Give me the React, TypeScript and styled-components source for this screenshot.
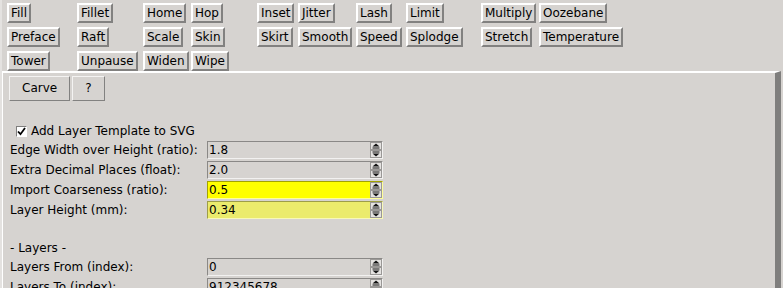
import * as React from 'react'
import styled, { createGlobalStyle } from 'styled-components'

const bg = '#d6d3d0'
const shadow = '#828180'

const GlobalStyle = createGlobalStyle`
  html, body {
    margin: 0;
    padding: 0;
    overflow: hidden;
    background: ${bg};
  }
  body {
    font-family: 'DejaVu Sans', 'Liberation Sans', sans-serif;
    font-size: 12px;
    color: #000;
  }
`

const Window = styled.div`
  width: 781px;
  height: 288px;
  overflow: hidden;
  border-left: 2px solid #e4e2e0;
  display: flex;
  flex-direction: column;
`

const ToolGrid = styled.div`
  height: 73px;
  box-sizing: border-box;
  padding: 3px 0 0 5px;
  display: grid;
  grid-template-columns: 70px 66px 48px 66px 41px 58px 50px 75px 58px auto;
  grid-auto-rows: 20px;
  row-gap: 4px;
  justify-items: start;
`

const ToolButton = styled.button<{ $col: number; $row: number }>`
  grid-column: ${p => p.$col};
  grid-row: ${p => p.$row};
  font: inherit;
  color: inherit;
  line-height: 16px;
  height: 20px;
  margin: 0;
  padding: 0 2px 0 2px;
  min-width: 22px;
  background: ${bg};
  border: 2px solid;
  border-color: #fff ${shadow} ${shadow} #fff;
  white-space: nowrap;
`

const Panel = styled.div`
  flex: 1;
  margin-right: 2px;
  border-top: 2px solid #fff;
  border-left: 1px solid #fff;
  border-right: 6px solid #7f7e7d;
  padding: 3px 0 0 6px;
  display: flex;
  flex-direction: column;
`

const ActionRow = styled.div`
  display: flex;
  gap: 2px;
`

const ActionButton = styled.button`
  font: inherit;
  color: inherit;
  height: 25px;
  line-height: 23px;
  margin: 0;
  padding: 0 12px;
  background: ${bg};
  border: 1px solid;
  border-color: #f4f3f2 ${shadow} ${shadow} #f4f3f2;
`

const CheckRow = styled.label`
  display: flex;
  align-items: center;
  gap: 4px;
  height: 18px;
  margin: 21px 0 1px 7px;
`

const CheckBox = styled.span`
  width: 9px;
  height: 9px;
  border: 1px solid;
  border-color: #7f7e7d #fff #fff #7f7e7d;
  background: #fff;
  display: flex;
  align-items: center;
  justify-content: center;
`

const Form = styled.div`
  display: grid;
  grid-template-columns: 197px 176px;
  align-items: center;
  row-gap: 2px;
  padding-left: 1px;
`

const Label = styled.div<{ $height?: number }>`
  grid-column: 1;
  height: ${p => p.$height ?? 18}px;
  line-height: ${p => p.$height ?? 18}px;
  white-space: nowrap;
`

const Blank = styled.div`
  grid-column: 1 / 3;
  height: 17px;
`

const Field = styled.div<{ $fill: string; $dark: string; $light: string }>`
  grid-column: 2;
  height: 18px;
  box-sizing: border-box;
  display: flex;
  background: ${p => p.$fill};
  border: 1px solid;
  border-color: ${p => p.$dark} ${p => p.$light} ${p => p.$light} ${p => p.$dark};
`

const Value = styled.span`
  flex: 1;
  line-height: 16px;
  padding-left: 1px;
`

const Spin = styled.svg`
  flex: none;
  width: 12px;
  height: 16px;
`

const tools: [string, number, number][] = [
  ['Fill', 1, 1], ['Fillet', 2, 1], ['Home', 3, 1], ['Hop', 4, 1],
  ['Inset', 5, 1], ['Jitter', 6, 1], ['Lash', 7, 1], ['Limit', 8, 1],
  ['Multiply', 9, 1], ['Oozebane', 10, 1],
  ['Preface', 1, 2], ['Raft', 2, 2], ['Scale', 3, 2], ['Skin', 4, 2],
  ['Skirt', 5, 2], ['Smooth', 6, 2], ['Speed', 7, 2], ['Splodge', 8, 2],
  ['Stretch', 9, 2], ['Temperature', 10, 2],
  ['Tower', 1, 3], ['Unpause', 2, 3], ['Widen', 3, 3], ['Wipe', 4, 3],
]

const tones = {
  plain: { fill: bg, dark: '#8a8886', light: '#f2f1f0' },
  bright: { fill: '#ffff00', dark: '#a3a300', light: '#ffff9a' },
  soft: { fill: '#ebeb6c', dark: '#9d9d48', light: '#f8f8b8' },
}

type Tone = keyof typeof tones

const SpinArrows = () => (
  <Spin viewBox="0 0 12 16">
    <rect x="0.5" y="0.5" width="11" height="7" fill="#e4e2e0" stroke="#9a9896" />
    <rect x="0.5" y="8.5" width="11" height="7" fill="#e4e2e0" stroke="#9a9896" />
    <polygon points="6,1.5 9.5,4.5 2.5,4.5" fill="#111" />
    <rect x="2.5" y="5.5" width="7" height="1" fill="#111" />
    <rect x="2.5" y="9.5" width="7" height="1" fill="#111" />
    <polygon points="2.5,11.5 9.5,11.5 6,14.5" fill="#111" />
  </Spin>
)

const Setting = ({ label, value, tone = 'plain' }: { label: string; value: string; tone?: Tone }) => {
  const t = tones[tone]
  return (
    <>
      <Label>{label}</Label>
      <Field $fill={t.fill} $dark={t.dark} $light={t.light}>
        <Value>{value}</Value>
        <SpinArrows />
      </Field>
    </>
  )
}

const App = () => {
  return (
    <Window>
      <GlobalStyle />
      <ToolGrid>
        {tools.map(([name, col, row]) => (
          <ToolButton key={name} $col={col} $row={row}>
            {name}
          </ToolButton>
        ))}
      </ToolGrid>
      <Panel>
        <ActionRow>
          <ActionButton>Carve</ActionButton>
          <ActionButton>?</ActionButton>
        </ActionRow>
        <CheckRow>
          <CheckBox>
            <svg width="9" height="9" viewBox="0 0 9 9">
              <polyline points="1,4.5 3.5,7.2 8,1" fill="none" stroke="#000" strokeWidth="1.8" />
            </svg>
          </CheckBox>
          Add Layer Template to SVG
        </CheckRow>
        <Form>
          <Setting label="Edge Width over Height (ratio):" value="1.8" />
          <Setting label="Extra Decimal Places (float):" value="2.0" />
          <Setting label="Import Coarseness (ratio):" value="0.5" tone="bright" />
          <Setting label="Layer Height (mm):" value="0.34" tone="soft" />
          <Blank />
          <Label $height={16}>- Layers -</Label>
          <Setting label="Layers From (index):" value="0" />
          <Setting label="Layers To (index):" value="912345678" />
        </Form>
      </Panel>
    </Window>
  )
}

export default App
